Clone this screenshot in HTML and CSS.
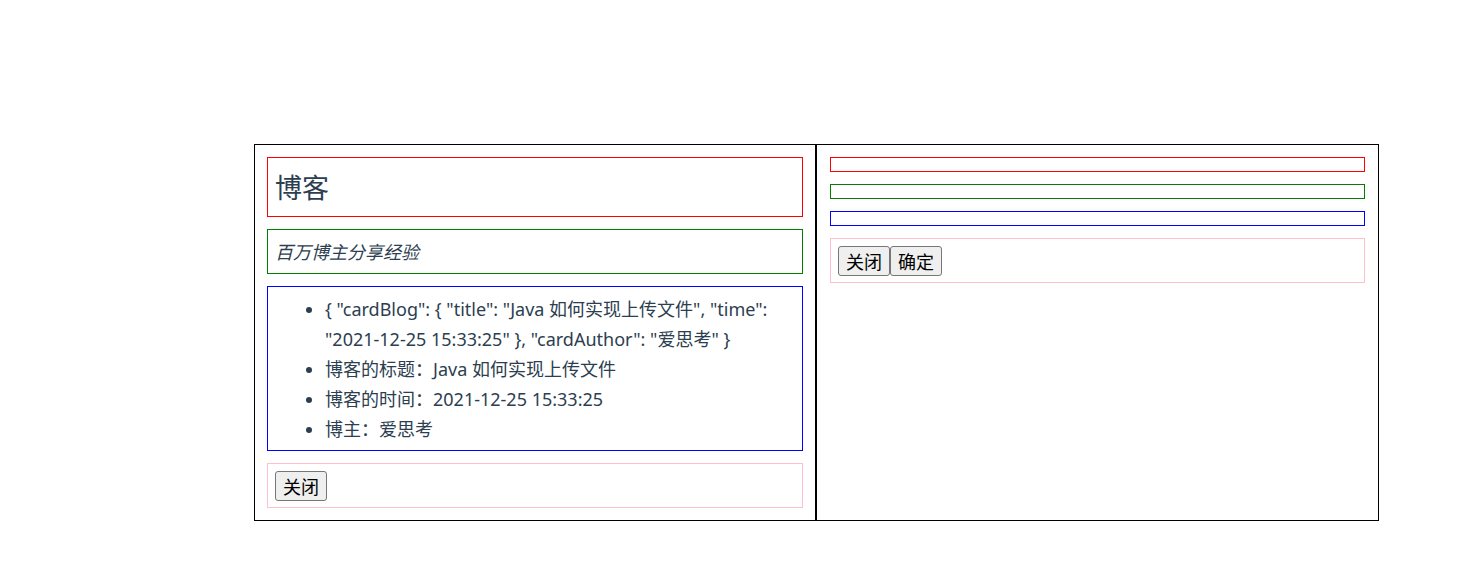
FILE: index.html
```html
<!DOCTYPE html>
<html lang="zh">
<head>
<meta charset="utf-8">
<title>博客</title>
<link rel="stylesheet" href="styles.css">
</head>
<body>
<div class="app">
  <div class="row">
    <div class="card">
      <div class="slot slot-header"><div class="title">博客</div></div>
      <div class="slot slot-sub"><div class="subtitle">百万博主分享经验</div></div>
      <div class="slot slot-body">
        <ul class="info">
          <li>{ "cardBlog": { "title": "Java 如何实现上传文件", "time": "2021-12-25 15:33:25" }, "cardAuthor": "爱思考" }</li>
          <li>博客的标题：Java 如何实现上传文件</li>
          <li>博客的时间：2021-12-25 15:33:25</li>
          <li>博主：爱思考</li>
        </ul>
      </div>
      <div class="slot slot-footer"><button class="btn">关闭</button></div>
    </div>
    <div class="card card-right">
      <div class="slot slot-header"></div>
      <div class="slot slot-sub"></div>
      <div class="slot slot-body"></div>
      <div class="slot slot-footer"><button class="btn">关闭</button><button class="btn">确定</button></div>
    </div>
  </div>
</div>
</body>
</html>
```
FILE: styles.css
```css
html, body {
  margin: 0;
  padding: 0;
  background: #fff;
}
.app {
  font-family: "Noto Sans", "Noto Sans CJK SC", sans-serif;
  color: #2c3e50;
  font-size: 18px;
  padding-top: 144px;
  padding-left: 254px;
}
.row {
  display: grid;
  grid-template-columns: 562px 563px;
  width: 1125px;
}
.card {
  border: 1px solid #000000;
  padding: 12px;
  display: flex;
  flex-direction: column;
  gap: 12px;
  min-height: 350px;
}
.card-right {
  padding: 12px 13px;
}
.slot {
  padding: 7px 7px 6px;
  line-height: 30px;
  border-width: 1px;
  border-style: solid;
}
.slot:empty {
  height: 1px;
  padding-bottom: 5px;
}
.slot-header { border-color: #ff0000; }
.slot-sub { border-color: #008000; }
.slot-body { border-color: #0000ff; }
.slot-footer { border-color: #ffc0cb; display: flex; align-items: flex-start; }
.title {
  font-size: 27px;
  line-height: 45px;
}
.subtitle {
  font-style: italic;
}
.info {
  margin: 0;
  padding-left: 50px;
}
.btn {
  font-family: "Noto Sans CJK SC", sans-serif;
  font-size: 18px;
  color: #000;
  background: #efefef;
  border: 1px solid #767676;
  border-radius: 3px;
  height: 30px;
  padding: 0 7px;
  line-height: 28px;
  margin: 0;
}
```
